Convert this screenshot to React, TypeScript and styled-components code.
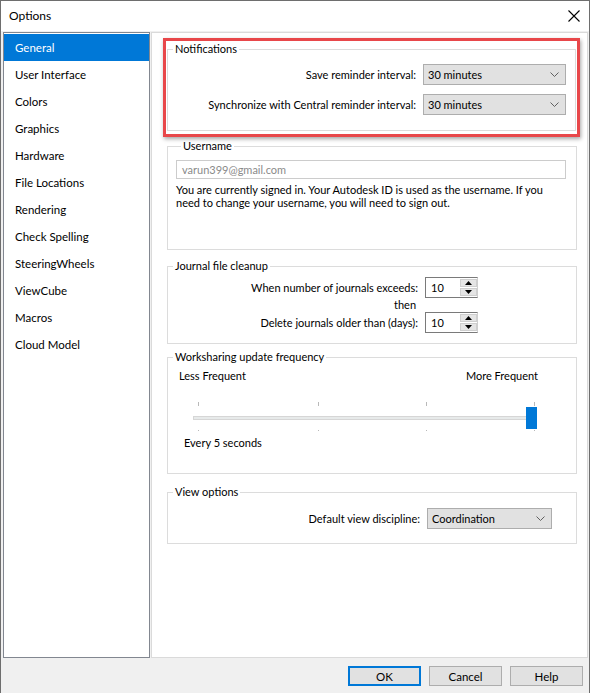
import React from 'react';
import styled, { createGlobalStyle } from 'styled-components';

const GlobalStyle = createGlobalStyle`
  html, body {
    margin: 0;
    padding: 0;
    background: #ffffff;
  }

  body {
    font-family: "Segoe UI", Lato, "Liberation Sans", sans-serif;
    font-size: 11px;
    color: #000000;
  }

  * {
    box-sizing: border-box;
  }
`;

const Window = styled.div`
  width: 590px;
  height: 693px;
  display: flex;
  flex-direction: column;
  background: #f0f0f0;
  border: 1px solid #6e6e6e;
  border-bottom: none;
`;

const TitleBar = styled.div`
  height: 30px;
  flex-shrink: 0;
  display: flex;
  align-items: center;
  justify-content: space-between;
  padding: 0 9px 0 8px;
  background: #ffffff;
`;

const Title = styled.span`
  font-size: 12px;
  line-height: 16px;
`;

const CloseIcon = styled.svg`
  width: 12px;
  height: 12px;
  display: block;
`;

const Body = styled.div`
  flex: 1;
  display: flex;
  gap: 1px;
  padding: 1px 1px 0 2px;
  min-height: 0;
`;

const Sidebar = styled.ul`
  width: 147px;
  flex-shrink: 0;
  margin: 0;
  padding: 1px 0 0;
  list-style: none;
  background: #ffffff;
  border: 1px solid #828790;
`;

const NavItem = styled.li<{ $active?: boolean }>`
  height: 27px;
  display: flex;
  align-items: center;
  padding-left: 11px;
  font-size: 11.5px;
  background: ${(p) => (p.$active ? '#0078d7' : 'transparent')};
  color: ${(p) => (p.$active ? '#ffffff' : '#000000')};
`;

const Panel = styled.div`
  width: 437px;
  flex-shrink: 0;
  display: flex;
  flex-direction: column;
  padding: 5px 10px 0 15px;
  background: #ffffff;
  border: 1px solid #dadada;
`;

const Highlight = styled.div`
  margin: 0 -3px 0 -4px;
  padding: 0 1px 3px 1px;
  border: 3px solid #e8474a;
  box-shadow: 1px 2px 4px rgba(0, 0, 0, 0.35);
`;

const Group = styled.fieldset<{ $top?: number; $pad?: string }>`
  margin: ${(p) => p.$top ?? 0}px 0 0;
  padding: ${(p) => p.$pad ?? '0'};
  border: 1px solid #dcdcdc;
  min-width: 0;
`;

const Legend = styled.legend`
  margin-left: 5px;
  padding: 0 2px;
  line-height: 16px;
`;

const FieldRow = styled.div<{ $gap?: number }>`
  display: flex;
  align-items: center;
  justify-content: flex-end;
  gap: 7px;
  margin-top: ${(p) => p.$gap ?? 0}px;
`;

const Label = styled.span`
  line-height: 16px;
  white-space: nowrap;
`;

const Combo = styled.div<{ $width: number }>`
  width: ${(p) => p.$width}px;
  height: 21px;
  display: flex;
  align-items: center;
  justify-content: space-between;
  padding: 0 6px 0 4px;
  background: #e1e1e1;
  border: 1px solid #adadad;
`;

const Chevron = styled.svg`
  width: 9px;
  height: 5px;
  display: block;
`;

const TextInput = styled.div`
  height: 19px;
  display: flex;
  align-items: center;
  padding-left: 5px;
  border: 1px solid #cccccc;
  color: #8a8a8a;
`;

const Note = styled.p`
  margin: 4px 0 0;
  line-height: 13px;
`;

const Spinner = styled.div`
  width: 53px;
  height: 21px;
  display: flex;
  border: 1px solid #7a7a7a;
  border-right-color: #cfcfcf;
  background: #ffffff;
`;

const SpinValue = styled.span`
  flex: 1;
  padding-left: 5px;
  line-height: 19px;
`;

const SpinButtons = styled.div`
  width: 17px;
  display: flex;
  flex-direction: column;
  gap: 1px;
  padding: 1px 0;
`;

const SpinButton = styled.div`
  flex: 1;
  display: flex;
  align-items: center;
  justify-content: center;
  background: #e5e5e5;
  border: 1px solid #cfcfcf;
`;

const Arrow = styled.svg`
  width: 7px;
  height: 4px;
  display: block;
`;

const Then = styled.div`
  line-height: 14px;
  padding-left: 226px;
`;

const ScaleLabels = styled.div`
  display: flex;
  justify-content: space-between;
  padding: 3px 38px 0 11px;
  line-height: 16px;
`;

const Slider = styled.div`
  position: relative;
  height: 29px;
  margin: 18px 39px 0 25px;
`;

const Tick = styled.span<{ $bottom?: boolean }>`
  position: absolute;
  width: 1px;
  height: ${(p) => (p.$bottom ? 1 : 4)}px;
  top: ${(p) => (p.$bottom ? 28 : 0)}px;
  background: #b9b9b9;
`;

const Track = styled.div`
  position: absolute;
  left: 0;
  right: 0;
  top: 14px;
  height: 4px;
  background: #e7eaea;
  border: 1px solid #d6d6d6;
`;

const Thumb = styled.div`
  position: absolute;
  right: 0;
  top: 5px;
  width: 11px;
  height: 22px;
  background: #0078d7;
`;

const Caption = styled.div`
  padding: 4px 0 0 16px;
  line-height: 16px;
`;

const Footer = styled.div`
  height: 35px;
  flex-shrink: 0;
  display: flex;
  justify-content: flex-end;
  gap: 8px;
  padding: 8px 6px 0 0;
`;

const Button = styled.button<{ $primary?: boolean }>`
  width: 73px;
  height: 20px;
  padding: 0;
  font: inherit;
  font-size: 11.5px;
  color: #000000;
  background: #e1e1e1;
  border: ${(p) => (p.$primary ? '2px solid #0078d7' : '1px solid #adadad')};
`;

const navItems = [
  'General',
  'User Interface',
  'Colors',
  'Graphics',
  'Hardware',
  'File Locations',
  'Rendering',
  'Check Spelling',
  'SteeringWheels',
  'ViewCube',
  'Macros',
  'Cloud Model',
];

const tickOffsets = [5, 125, 233, 341];

const DropDown: React.FC<{ value: string; width: number }> = ({ value, width }) => (
  <Combo $width={width}>
    <span>{value}</span>
    <Chevron viewBox="0 0 9 5">
      <path d="M0.5 0.5 L4.5 4.5 L8.5 0.5" fill="none" stroke="#606060" strokeWidth="1" />
    </Chevron>
  </Combo>
);

const NumberBox: React.FC<{ value: number }> = ({ value }) => (
  <Spinner>
    <SpinValue>{value}</SpinValue>
    <SpinButtons>
      <SpinButton>
        <Arrow viewBox="0 0 7 4">
          <path d="M0 4 L3.5 0 L7 4 Z" fill="#000" />
        </Arrow>
      </SpinButton>
      <SpinButton>
        <Arrow viewBox="0 0 7 4">
          <path d="M0 0 L7 0 L3.5 4 Z" fill="#000" />
        </Arrow>
      </SpinButton>
    </SpinButtons>
  </Spinner>
);

export default function App() {
  return (
    <>
      <GlobalStyle />
      <Window>
        <TitleBar>
          <Title>Options</Title>
          <CloseIcon viewBox="0 0 12 12">
            <path d="M0.5 0.5 L11.5 11.5 M11.5 0.5 L0.5 11.5" stroke="#000" strokeWidth="1.1" />
          </CloseIcon>
        </TitleBar>

        <Body>
          <Sidebar>
            {navItems.map((item, i) => (
              <NavItem key={item} $active={i === 0}>
                {item}
              </NavItem>
            ))}
          </Sidebar>

          <Panel>
            <Highlight>
              <Group $pad="7px 9px 15px 0">
                <Legend>Notifications</Legend>
                <FieldRow>
                  <Label>Save reminder interval:</Label>
                  <DropDown value="30 minutes" width={143} />
                </FieldRow>
                <FieldRow $gap={9}>
                  <Label>Synchronize with Central reminder interval:</Label>
                  <DropDown value="30 minutes" width={143} />
                </FieldRow>
              </Group>
            </Highlight>

            <Group $top={1} $pad="6px 10px 0 8px" style={{ height: 112 }}>
              <Legend>Username</Legend>
              <TextInput>varun399@gmail.com</TextInput>
              <Note>
                You are currently signed in. Your Autodesk ID is used as the username. If you
                need to change your username, you will need to sign out.
              </Note>
            </Group>

            <Group $top={8} $pad="3px 98px 10px 0">
              <Legend>Journal file cleanup</Legend>
              <FieldRow>
                <Label>When number of journals exceeds:</Label>
                <NumberBox value={10} />
              </FieldRow>
              <Then>then</Then>
              <FieldRow>
                <Label>Delete journals older than (days):</Label>
                <NumberBox value={10} />
              </FieldRow>
            </Group>

            <Group $top={5} $pad="0 0 22px 0">
              <Legend>Worksharing update frequency</Legend>
              <ScaleLabels>
                <span>Less Frequent</span>
                <span>More Frequent</span>
              </ScaleLabels>
              <Slider>
                {tickOffsets.map((x) => (
                  <React.Fragment key={x}>
                    <Tick style={{ left: x }} />
                    <Tick $bottom style={{ left: x }} />
                  </React.Fragment>
                ))}
                <Track />
                <Thumb />
              </Slider>
              <Caption>Every 5 seconds</Caption>
            </Group>

            <Group $top={10} $pad="8px 24px 14px 0">
              <Legend>View options</Legend>
              <FieldRow>
                <Label>Default view discipline:</Label>
                <DropDown value="Coordination" width={125} />
              </FieldRow>
            </Group>
          </Panel>
        </Body>

        <Footer>
          <Button $primary>OK</Button>
          <Button>Cancel</Button>
          <Button>Help</Button>
        </Footer>
      </Window>
    </>
  );
}
